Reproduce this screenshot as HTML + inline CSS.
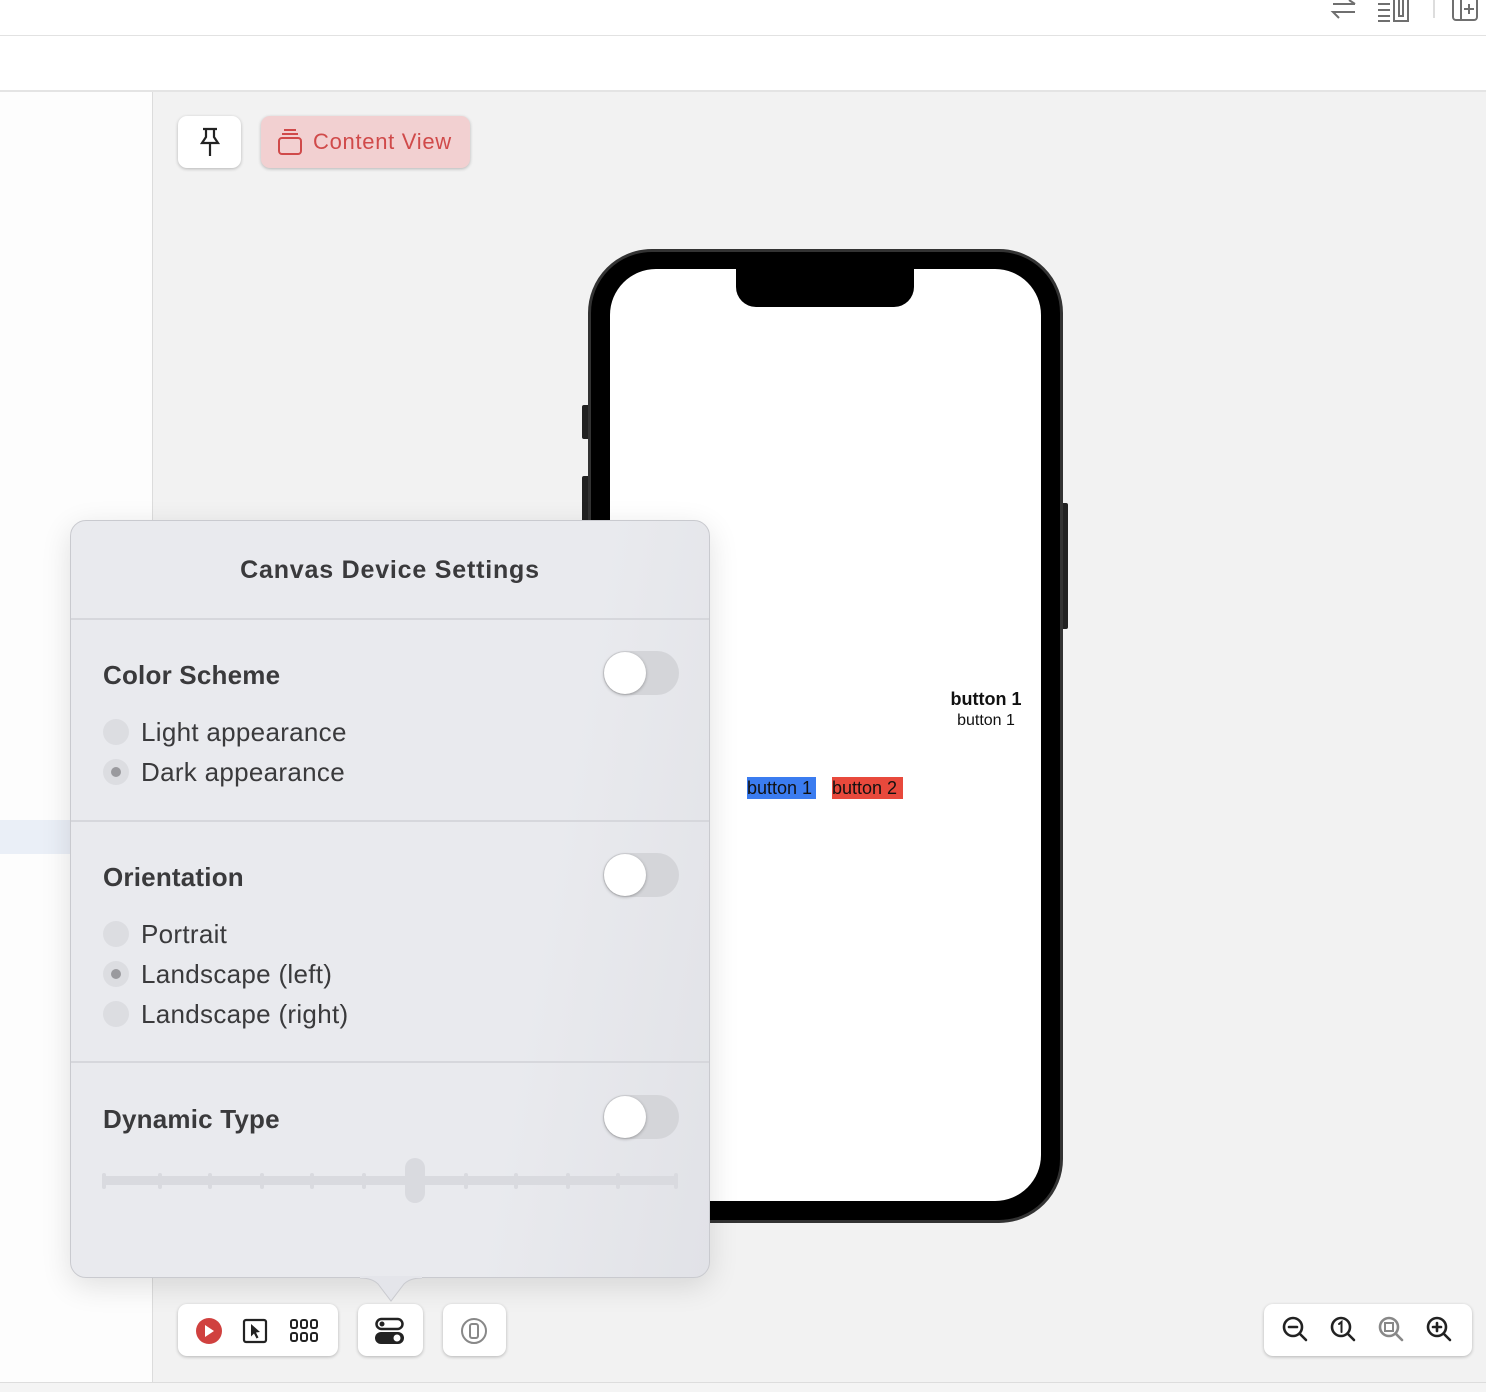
<!DOCTYPE html>
<html><head><meta charset="utf-8"><style>
*{box-sizing:border-box;margin:0;padding:0}
body{width:1486px;height:1392px;position:relative;overflow:hidden;background:#fff;font-family:"Liberation Sans",sans-serif}
.a{position:absolute}
.btn{position:absolute;background:#fff;border-radius:9px;box-shadow:0 1px 3px rgba(0,0,0,.25)}
.sec{position:absolute;left:0;right:0;border-top:2px solid #d6d7dc}
.h{position:absolute;left:32px;font-weight:bold;font-size:26px;color:#3a3a3c;letter-spacing:.2px}
.tg{position:absolute;left:532px;width:76px;height:44px;border-radius:22px;background:#d4d5d9}
.tg:after{content:"";position:absolute;left:1px;top:1px;width:42px;height:42px;border-radius:50%;background:#fff;box-shadow:0 1px 3px rgba(0,0,0,.3)}
.r{position:absolute;left:32px;font-size:26px;color:#3a3a3c;padding-left:38px;line-height:30px;letter-spacing:.3px}
.r:before{content:"";position:absolute;left:0;top:2px;width:26px;height:26px;border-radius:50%;background:#dcdde1}
.r.on:after{content:"";position:absolute;left:8px;top:10px;width:10px;height:10px;border-radius:50%;background:#9a9a9e}
</style></head><body>
<div class="a" style="left:0;top:35px;width:1486px;height:1px;background:#e2e2e2"></div>
<div class="a" style="left:0;top:90px;width:1486px;height:2px;background:#e4e4e4"></div>
<div class="a" style="left:0;top:92px;width:152px;height:1290px;background:#fdfdfd"></div>
<div class="a" style="left:0;top:820px;width:152px;height:34px;background:#eaeff7"></div>
<div class="a" style="left:152px;top:92px;width:1px;height:1290px;background:#dcdcdc"></div>
<div class="a" style="left:153px;top:92px;width:1333px;height:1290px;background:#f2f2f2"></div>
<div class="a" style="left:0;top:1382px;width:1486px;height:10px;background:#f4f4f4;border-top:1px solid #ddd"></div>
<svg class="a" style="left:1325px;top:0" width="161" height="24" fill="none" stroke="#6f6f6f" stroke-width="2">
<path d="M8 4h22M24 0l6 4M30 12H8l6 6"/>
<path d="M53 4h12M53 10h12M53 16h12M53 21h12M69 0v21h14V0M74 0v16h4V0"/>
<path d="M109 0v18" stroke="#ddd"/>
<path d="M128 0v17a3 3 0 0 0 3 3h18a3 3 0 0 0 3-3V0M136 0v20M144 4v10M139 9h10"/>
</svg>
<div class="btn" style="left:178px;top:116px;width:63px;height:52px"></div>
<svg class="a" style="left:198px;top:127px" width="24" height="32" fill="none" stroke="#222" stroke-width="2.2"><path d="M5 2h14M8 2v8l-4 6h16l-4-6V2M12 16v13"/></svg>
<div class="btn" style="left:261px;top:116px;width:209px;height:52px;background:#f2d0d1"></div>
<svg class="a" style="left:277px;top:128px" width="26" height="28" fill="none" stroke="#d04a4a" stroke-width="2"><path d="M7 2h12M5 6h16"/><rect x="2" y="10" width="22" height="16" rx="3"/></svg>
<div class="a" style="left:313px;top:129px;font-size:22px;color:#d04a4a;letter-spacing:.7px">Content View</div>
<div class="a" style="left:582px;top:405px;width:8px;height:34px;background:#222;border-radius:2px"></div>
<div class="a" style="left:582px;top:476px;width:8px;height:64px;background:#222;border-radius:2px"></div>
<div class="a" style="left:1060px;top:503px;width:8px;height:126px;background:#222;border-radius:2px"></div>
<div class="a" style="left:588px;top:249px;width:475px;height:974px;background:#000;border-radius:64px;border:3px solid #333"></div>
<div class="a" style="left:610px;top:269px;width:431px;height:932px;background:#fff;border-radius:46px"></div>
<div class="a" style="left:736px;top:269px;width:178px;height:38px;background:#000;border-radius:0 0 20px 20px"></div>
<div class="a" style="left:930px;top:689px;width:112px;text-align:center;font-size:18px;font-weight:bold;color:#111">button 1</div>
<div class="a" style="left:930px;top:712px;width:112px;text-align:center;font-size:16px;color:#111">button 1</div>
<div class="a" style="left:747px;top:777px;width:69px;height:22px;background:#3b7cf0;font-size:18px;line-height:22px;color:#111">button 1</div>
<div class="a" style="left:832px;top:777px;width:71px;height:22px;background:#e8493c;font-size:18px;line-height:22px;color:#111">button 2</div>
<div class="a" style="left:70px;top:520px;width:640px;height:758px;background:linear-gradient(100deg,#e9eaee 70%,#e1e2e7);border-radius:16px;border:1px solid #c9cacf;box-shadow:0 8px 30px rgba(0,0,0,.12)">
<div class="a" style="left:0;right:0;top:35px;text-align:center;font-weight:bold;font-size:25px;color:#3a3a3c;letter-spacing:.8px">Canvas Device Settings</div>
<div class="sec" style="top:97px"></div>
<div class="h" style="top:139px">Color Scheme</div>
<div class="tg" style="top:130px"></div>
<div class="r" style="top:196px">Light appearance</div>
<div class="r on" style="top:236px">Dark appearance</div>
<div class="sec" style="top:299px"></div>
<div class="h" style="top:341px">Orientation</div>
<div class="tg" style="top:332px"></div>
<div class="r" style="top:398px">Portrait</div>
<div class="r on" style="top:438px">Landscape (left)</div>
<div class="r" style="top:478px">Landscape (right)</div>
<div class="sec" style="top:540px"></div>
<div class="h" style="top:583px">Dynamic Type</div>
<div class="tg" style="top:574px"></div>
<svg class="a" style="left:30px;top:636px" width="580" height="48"><g fill="#d9dadf"><rect x="2" y="19" width="574" height="9"/>
<g><rect x="1" y="16" width="4" height="16" rx="2"/><rect x="57" y="16" width="4" height="16" rx="2"/><rect x="107" y="16" width="4" height="16" rx="2"/><rect x="159" y="16" width="4" height="16" rx="2"/><rect x="209" y="16" width="4" height="16" rx="2"/><rect x="261" y="16" width="4" height="16" rx="2"/><rect x="363" y="16" width="4" height="16" rx="2"/><rect x="413" y="16" width="4" height="16" rx="2"/><rect x="465" y="16" width="4" height="16" rx="2"/><rect x="515" y="16" width="4" height="16" rx="2"/><rect x="573" y="16" width="4" height="16" rx="2"/></g>
<rect x="304" y="1" width="20" height="45" rx="10"/></g></svg>
</div>
<svg class="a" style="left:360px;top:1276px" width="62" height="28"><path d="M0 2 Q12 2 18 8 L31 25 L44 8 Q50 2 62 2" fill="#e4e5ea" stroke="#c9cacf"/><rect x="0" y="0" width="62" height="2" fill="#e4e5ea"/></svg>
<div class="btn" style="left:178px;top:1304px;width:160px;height:52px"></div>
<svg class="a" style="left:195px;top:1316px" width="130" height="30">
<circle cx="14" cy="15" r="13" fill="#d0413f"/><path d="M10 9l9 6-9 6z" fill="#fff"/>
<rect x="49" y="4" width="22" height="22" rx="2" fill="none" stroke="#222" stroke-width="2.2"/><path d="M56 8l9 8-4 .5 2.5 5-2 1-2.5-5-3 3z" fill="#222"/>
<g fill="none" stroke="#222" stroke-width="2"><rect x="96" y="4" width="6" height="8" rx="2"/><rect x="106" y="4" width="6" height="8" rx="2"/><rect x="116" y="4" width="6" height="8" rx="2"/><rect x="96" y="17" width="6" height="8" rx="2"/><rect x="106" y="17" width="6" height="8" rx="2"/><rect x="116" y="17" width="6" height="8" rx="2"/></g></svg>
<div class="btn" style="left:358px;top:1304px;width:65px;height:52px"></div>
<svg class="a" style="left:375px;top:1317px" width="30" height="28"><rect x="1.5" y="2" width="26" height="10" rx="5" fill="none" stroke="#222" stroke-width="2.5"/><circle cx="7" cy="7" r="2.5" fill="#222"/><rect x="0" y="15" width="29" height="12" rx="6" fill="#222"/><circle cx="22" cy="21" r="3.5" fill="#fff"/></svg>
<div class="btn" style="left:443px;top:1304px;width:63px;height:52px"></div>
<svg class="a" style="left:460px;top:1317px" width="28" height="28" fill="none" stroke="#888" stroke-width="2"><circle cx="14" cy="14" r="12"/><rect x="10" y="7" width="8" height="14" rx="2"/></svg>
<div class="btn" style="left:1264px;top:1304px;width:208px;height:52px"></div>
<svg class="a" style="left:1280px;top:1314px" width="180" height="32" fill="none" stroke-width="2.6" stroke-linecap="round">
<g stroke="#222"><circle cx="13" cy="13" r="9"/><path d="M20 20l6 6M9 13h8"/></g>
<g stroke="#222"><circle cx="61" cy="13" r="9"/><path d="M68 20l6 6"/><path d="M59 10l2.5-2v10" stroke-width="2"/></g>
<g stroke="#888"><circle cx="109" cy="13" r="9"/><path d="M116 20l6 6"/><rect x="105" y="9" width="8" height="8" stroke-width="2"/></g>
<g stroke="#222"><circle cx="157" cy="13" r="9"/><path d="M164 20l6 6M153 13h8M157 9v8"/></g></svg>
</body></html>
